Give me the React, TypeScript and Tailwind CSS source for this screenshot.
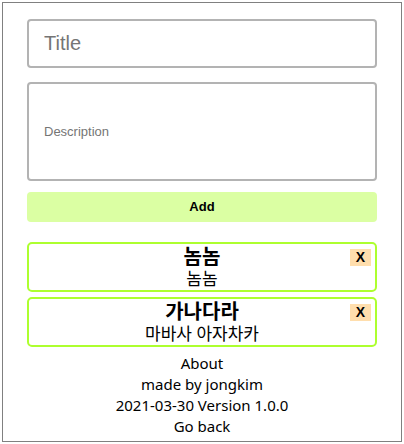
import React from "react"

const todos = [
  { id: 1, title: "놈놈", desc: "놈놈" },
  { id: 2, title: "가나다라", desc: "마바사 아자차카" },
]

export default function App() {
  return (
    <div className="m-[2px] h-[440px] w-[400px] border border-[#808080] bg-white px-6 pt-4 font-['Noto_Sans','Noto_Sans_CJK_KR',sans-serif] text-black">
      <input
        className="block h-[49px] w-full rounded-[4px] border-2 border-[#b3b3b3] px-[15px] font-['Liberation_Sans',sans-serif] text-[20px] placeholder:text-[#757575] outline-none"
        placeholder="Title"
      />
      <input
        className="mt-[14px] block h-[99px] w-full rounded-[4px] border-2 border-[#b3b3b3] px-[15px] font-['Liberation_Sans',sans-serif] text-[13px] placeholder:text-[#757575] outline-none"
        placeholder="Description"
      />
      <button className="mt-[11px] block h-[30px] w-full rounded-[4px] bg-[#dbffa3] font-['Liberation_Sans',sans-serif] text-[13px] font-bold">
        Add
      </button>
      <ul className="mt-5 flex flex-col gap-[5px]">
        {todos.map((t) => (
          <li key={t.id} className="relative flex h-[50px] flex-col items-center rounded-[5px] border-2 border-[#adff2f]">
            <span className="text-[20px] font-bold leading-[25px]">{t.title}</span>
            <span className="text-[17px] leading-[20px]">{t.desc}</span>
            <button className="absolute right-[4px] top-[5px] flex h-[17px] w-[21px] items-center justify-center bg-[#ffdead] font-['Liberation_Sans',sans-serif] text-[14px] font-bold">
              X
            </button>
          </li>
        ))}
      </ul>
      <div className="mt-[6px] flex flex-col items-center text-[15px] leading-[21px]">
        <span>About</span>
        <span>made by jongkim</span>
        <span>2021-03-30 Version 1.0.0</span>
        <span>Go back</span>
      </div>
    </div>
  )
}
